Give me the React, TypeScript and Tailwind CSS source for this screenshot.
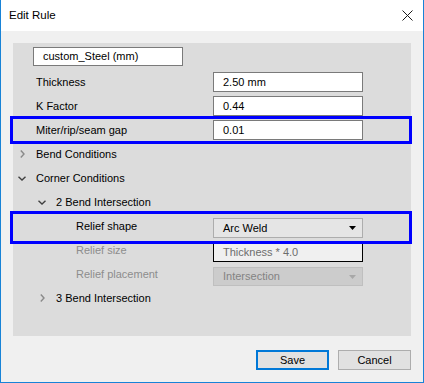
import React from "react";

const font = { fontFamily: '"Liberation Sans", Arial, sans-serif' };

function ChevronRight() {
  return (
    <svg width="5" height="8" viewBox="0 0 5 8" className="block">
      <polyline points="0.8,0.5 4,4 0.8,7.5" fill="none" stroke="#8a8a8a" strokeWidth="1.4" />
    </svg>
  );
}

function ChevronDown() {
  return (
    <svg width="8" height="5" viewBox="0 0 8 5" className="block">
      <polyline points="0.5,0.8 4,4 7.5,0.8" fill="none" stroke="#404040" strokeWidth="1.4" />
    </svg>
  );
}

function Highlight({ tall }: { tall?: boolean }) {
  return (
    <div
      className={
        tall
          ? "pointer-events-none absolute left-[-3px] right-[-1px] top-[-3px] bottom-[-6px] border-[3px] border-[#0000ff]"
          : "pointer-events-none absolute left-[-3px] right-[-1px] top-[-2px] bottom-[-2px] border-[3px] border-[#0000ff]"
      }
    />
  );
}

function FieldRow({ label, value, highlight }: { label: string; value: string; highlight?: boolean }) {
  return (
    <div className="relative flex h-[24px] items-center">
      <span className="w-[200px] pl-[23px] text-[11px] text-black">{label}</span>
      <div className="flex h-[20px] w-[150px] items-center border border-[#7a7a7a] bg-white pl-[9px] text-[11px] text-black">
        {value}
      </div>
      {highlight && <Highlight />}
    </div>
  );
}

function TreeRow({ depth, open, label }: { depth: number; open: boolean; label: string }) {
  // chevron column: depth 0 -> label at 23px, depth 1 -> label at 43px
  const pad =
    depth === 0 ? (open ? "w-[23px] pl-[5px]" : "w-[23px] pl-[7px]") : open ? "w-[43px] pl-[25px]" : "w-[43px] pl-[27px]";
  return (
    <div className="flex h-[24px] items-center">
      <div className={"flex justify-start " + pad}>{open ? <ChevronDown /> : <ChevronRight />}</div>
      <span className="text-[11px] text-black">{label}</span>
    </div>
  );
}

export default function App() {
  return (
    <div
      className="flex h-[383px] w-[424px] flex-col border-x border-b border-[#1883d7] bg-[#f0f0f0]"
      style={font}
    >
      <div className="flex h-[31px] shrink-0 items-center justify-between bg-white pl-[8px] pr-[10px]">
        <span className="text-[11.5px] text-black">Edit Rule</span>
        <svg width="11" height="11" viewBox="0 0 11 11">
          <path d="M0.5 0.5 L10.5 10.5 M10.5 0.5 L0.5 10.5" stroke="#1a1a1a" strokeWidth="1" />
        </svg>
      </div>

      <div className="flex flex-1 flex-col px-[12px] pt-[12px] pb-[12px]">
        <div className="h-[293px] bg-[#dcdcdc]">
          <div className="ml-[20px] mt-[4px] flex h-[19px] w-[150px] items-center border border-[#7a7a7a] bg-white pl-[9px] text-[11px] text-black">
            custom_Steel (mm)
          </div>
          <div className="mt-[4px]">
            <FieldRow label="Thickness" value="2.50 mm" />
            <FieldRow label="K Factor" value="0.44" />
            <FieldRow label="Miter/rip/seam gap" value="0.01" highlight />
            <TreeRow depth={0} open={false} label="Bend Conditions" />
            <TreeRow depth={0} open label="Corner Conditions" />
            <TreeRow depth={1} open label="2 Bend Intersection" />

            <div className="relative flex h-[24px] items-end">
              <span className="w-[200px] self-center pl-[63px] text-[11px] text-black">Relief shape</span>
              <div className="flex h-[20px] w-[150px] items-center justify-between border border-[#adadad] bg-[#e5e5e5] pl-[9px] pr-[6px] text-[11px] text-black">
                <span>Arc Weld</span>
                <svg width="7" height="4" viewBox="0 0 7 4">
                  <polygon points="0,0 7,0 3.5,4" fill="#000" />
                </svg>
              </div>
              <Highlight tall />
            </div>

            <div className="flex h-[24px] items-end">
              <span className="w-[200px] self-center pl-[63px] text-[11px] text-[#8d8d8d]">Relief size</span>
              <div className="flex h-[19px] w-[150px] items-center border border-black bg-[#f0f0f0] pl-[9px] text-[11px] text-[#6d6d6d]">
                Thickness * 4.0
              </div>
            </div>

            <div className="flex h-[24px] items-end">
              <span className="w-[200px] self-center pl-[63px] text-[11px] text-[#8d8d8d]">Relief placement</span>
              <div className="flex h-[19px] w-[150px] items-center justify-between border border-[#bfbfbf] bg-[#cccccc] pl-[9px] pr-[6px] text-[11px] text-[#838383]">
                <span>Intersection</span>
                <svg width="7" height="4" viewBox="0 0 7 4">
                  <polygon points="0,0 7,0 3.5,4" fill="#a8a8a8" />
                </svg>
              </div>
            </div>

            <TreeRow depth={1} open={false} label="3 Bend Intersection" />
          </div>
        </div>

        <div className="mt-[14px] flex justify-end gap-[9px]">
          <button className="flex h-[20px] w-[73px] items-center justify-center border-2 border-[#0078d7] bg-[#e1e1e1] text-[11px] text-black">
            Save
          </button>
          <button className="flex h-[20px] w-[73px] items-center justify-center border border-[#adadad] bg-[#e1e1e1] text-[11px] text-black">
            Cancel
          </button>
        </div>
      </div>
    </div>
  );
}
